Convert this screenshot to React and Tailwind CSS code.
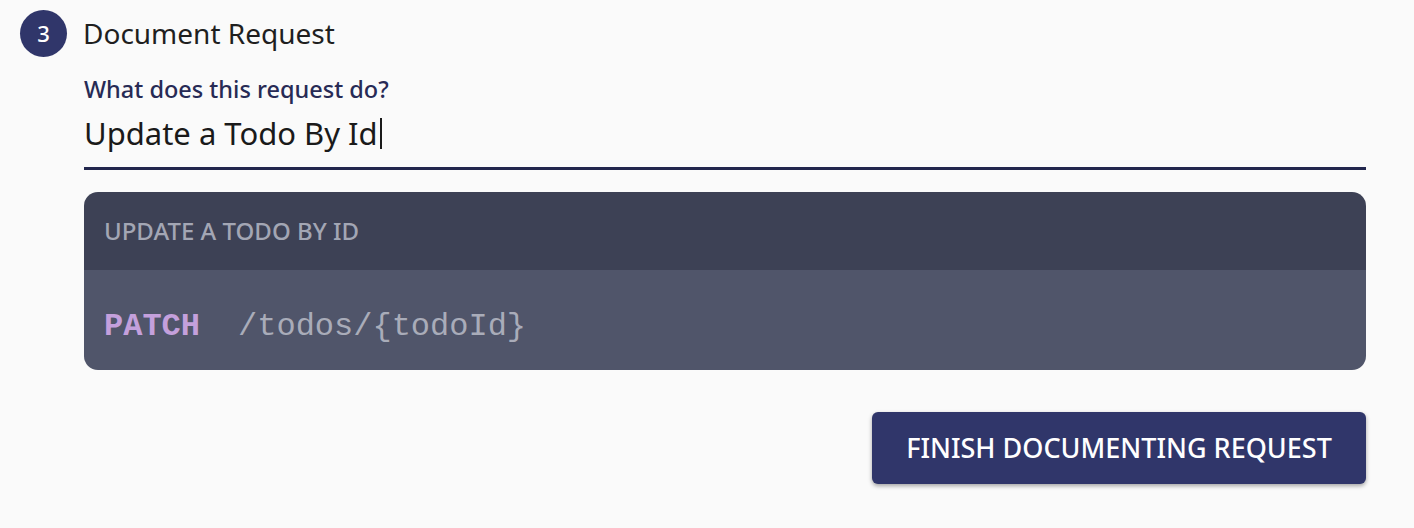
export default function App() {
  const sans = { fontFamily: '"Noto Sans", "Open Sans", sans-serif' };
  return (
    <div className="w-[1414px] h-[528px] bg-[#fafafa] overflow-hidden" style={sans}>
      <div className="flex items-center gap-4 pl-5 pt-[10px]">
        <div className="w-[47px] h-[47px] rounded-full bg-[#30366a] flex items-center justify-center text-white text-[22px] font-medium">3</div>
        <div className="text-[28px] text-[#1f1f1f] leading-[47px]">Document Request</div>
      </div>
      <div className="pl-[84px] pr-[48px]">
        <div className="mt-[16px] text-[23.5px] font-medium text-[#272a55] leading-[32px]">What does this request do?</div>
        <div className="mt-[6px] flex items-center h-[44px] text-[31px] text-[#1a1a1a]">
          <span>Update a Todo By Id</span>
          <span className="w-[2px] h-[31px] bg-[#1a1a1a] ml-[2px]"></span>
        </div>
        <div className="mt-[12px] h-[3px] bg-[#22264d]"></div>
        <div className="mt-[22px] rounded-[14px] overflow-hidden">
          <div className="h-[78px] bg-[#3d4155] flex items-center pl-5 text-[24px] font-medium text-[#a3a6b4]">UPDATE A TODO BY ID</div>
          <div className="h-[100px] bg-[#50556a] flex items-center pl-5 pt-[14px] text-[32px]" style={{ fontFamily: '"Liberation Mono", "Courier New", monospace' }}>
            <span className="font-bold text-[#c4a0dc]">PATCH</span>
            <span className="ml-[38px] text-[#a9acb9]">/todos/{'{todoId}'}</span>
          </div>
        </div>
        <div className="flex justify-end mt-[42px]">
          <button className="w-[494px] h-[72px] rounded-[6px] bg-[#30366a] text-white text-[27px] font-medium shadow-[0_2px_4px_rgba(0,0,0,0.35)]">FINISH DOCUMENTING REQUEST</button>
        </div>
      </div>
    </div>
  );
}
